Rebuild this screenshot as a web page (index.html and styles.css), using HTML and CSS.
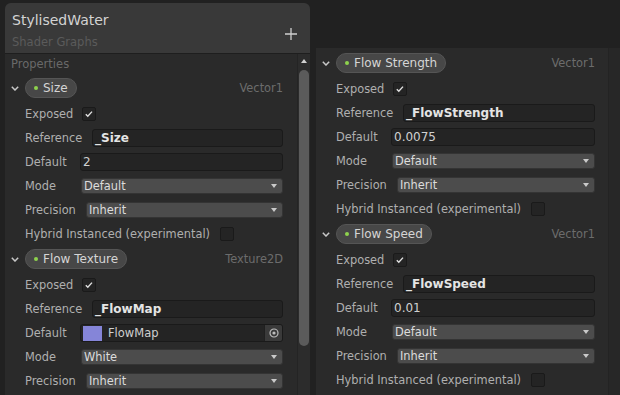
FILE: index.html
```html
<!DOCTYPE html>
<html>
<head>
<meta charset="utf-8">
<link rel="stylesheet" href="styles.css">
</head>
<body>
<div class="stage">
  <section class="panel left">
    <header class="head">
      <div class="head-text">
        <div class="title">StylisedWater</div>
        <div class="subtitle">Shader Graphs</div>
      </div>
      <svg class="plus" width="12" height="12" viewBox="0 0 12 12"><path d="M6 0V12M0 6H12" stroke="#cfcfcf" stroke-width="1.3" fill="none"/></svg>
    </header>
    <div class="body">
      <div class="content">
        <div class="section-label">Properties</div>

        <div class="prop">
          <div class="prop-head">
            <span class="chev"><svg width="8" height="5" viewBox="0 0 8 5"><path d="M0.8 0.8L4 4L7.2 0.8" stroke="#c8c8c8" stroke-width="1.5" fill="none"/></svg></span>
            <span class="pill"><span class="dot"></span>Size</span>
            <span class="type">Vector1</span>
          </div>
          <div class="row"><span class="label w-exp">Exposed</span><span class="check"><svg width="12" height="12" viewBox="0 0 12 12"><path d="M2.8 6.2L4.8 8.2L9 3.6" stroke="#e2e2e2" stroke-width="1.4" fill="none"/></svg></span></div>
          <div class="row"><span class="label w-ref">Reference</span><span class="input bold">_Size</span></div>
          <div class="row"><span class="label w-def">Default</span><span class="input">2</span></div>
          <div class="row"><span class="label w-mode">Mode</span><span class="select"><span>Default</span><span class="arrow"></span></span></div>
          <div class="row"><span class="label w-prec">Precision</span><span class="select"><span>Inherit</span><span class="arrow"></span></span></div>
          <div class="row"><span class="label w-hyb">Hybrid Instanced (experimental)</span><span class="check"></span></div>
        </div>

        <div class="prop">
          <div class="prop-head">
            <span class="chev"><svg width="8" height="5" viewBox="0 0 8 5"><path d="M0.8 0.8L4 4L7.2 0.8" stroke="#c8c8c8" stroke-width="1.5" fill="none"/></svg></span>
            <span class="pill"><span class="dot"></span>Flow Texture</span>
            <span class="type">Texture2D</span>
          </div>
          <div class="row"><span class="label w-exp">Exposed</span><span class="check"><svg width="12" height="12" viewBox="0 0 12 12"><path d="M2.8 6.2L4.8 8.2L9 3.6" stroke="#e2e2e2" stroke-width="1.4" fill="none"/></svg></span></div>
          <div class="row"><span class="label w-ref">Reference</span><span class="input bold">_FlowMap</span></div>
          <div class="row"><span class="label w-def">Default</span>
            <span class="input object">
              <span class="swatch"></span><span class="obj-name">FlowMap</span>
              <span class="picker"><svg width="10" height="10" viewBox="0 0 10 10"><circle cx="5" cy="5" r="4" stroke="#bdbdbd" stroke-width="1.2" fill="none"/><circle cx="5" cy="5" r="1.6" fill="#bdbdbd"/></svg></span>
            </span>
          </div>
          <div class="row"><span class="label w-mode">Mode</span><span class="select"><span>White</span><span class="arrow"></span></span></div>
          <div class="row"><span class="label w-prec">Precision</span><span class="select"><span>Inherit</span><span class="arrow"></span></span></div>
        </div>
      </div>
      <div class="scrolltrack">
        <span class="up-arrow"></span>
        <span class="thumb"></span>
      </div>
    </div>
  </section>

  <section class="panel right">
    <div class="content">
      <div class="prop">
        <div class="prop-head">
          <span class="chev"><svg width="8" height="5" viewBox="0 0 8 5"><path d="M0.8 0.8L4 4L7.2 0.8" stroke="#c8c8c8" stroke-width="1.5" fill="none"/></svg></span>
          <span class="pill"><span class="dot"></span>Flow Strength</span>
          <span class="type">Vector1</span>
        </div>
        <div class="row"><span class="label w-exp">Exposed</span><span class="check"><svg width="12" height="12" viewBox="0 0 12 12"><path d="M2.8 6.2L4.8 8.2L9 3.6" stroke="#e2e2e2" stroke-width="1.4" fill="none"/></svg></span></div>
        <div class="row"><span class="label w-ref">Reference</span><span class="input bold">_FlowStrength</span></div>
        <div class="row"><span class="label w-def">Default</span><span class="input">0.0075</span></div>
        <div class="row"><span class="label w-mode">Mode</span><span class="select"><span>Default</span><span class="arrow"></span></span></div>
        <div class="row"><span class="label w-prec">Precision</span><span class="select"><span>Inherit</span><span class="arrow"></span></span></div>
        <div class="row"><span class="label w-hyb">Hybrid Instanced (experimental)</span><span class="check"></span></div>
      </div>

      <div class="prop">
        <div class="prop-head">
          <span class="chev"><svg width="8" height="5" viewBox="0 0 8 5"><path d="M0.8 0.8L4 4L7.2 0.8" stroke="#c8c8c8" stroke-width="1.5" fill="none"/></svg></span>
          <span class="pill"><span class="dot"></span>Flow Speed</span>
          <span class="type">Vector1</span>
        </div>
        <div class="row"><span class="label w-exp">Exposed</span><span class="check"><svg width="12" height="12" viewBox="0 0 12 12"><path d="M2.8 6.2L4.8 8.2L9 3.6" stroke="#e2e2e2" stroke-width="1.4" fill="none"/></svg></span></div>
        <div class="row"><span class="label w-ref">Reference</span><span class="input bold">_FlowSpeed</span></div>
        <div class="row"><span class="label w-def">Default</span><span class="input">0.01</span></div>
        <div class="row"><span class="label w-mode">Mode</span><span class="select"><span>Default</span><span class="arrow"></span></span></div>
        <div class="row"><span class="label w-prec">Precision</span><span class="select"><span>Inherit</span><span class="arrow"></span></span></div>
        <div class="row"><span class="label w-hyb">Hybrid Instanced (experimental)</span><span class="check"></span></div>
      </div>
    </div>
    <div class="side-track"></div>
  </section>
</div>
</body>
</html>
```

FILE: styles.css
```css
* { box-sizing: border-box; }
html, body { margin: 0; padding: 0; }
body {
  background: #212121;
  font-family: "DejaVu Sans", "Verdana", sans-serif;
  font-size: 11.4px;
  color: #b3b3b3;
  width: 620px;
  height: 395px;
  overflow: hidden;
}
.stage {
  display: flex;
  align-items: flex-start;
  height: 395px;
  overflow: hidden;
}
.panel { background: #2a2a2a; }
.left {
  width: 305px;
  margin: 3px 0 0 5px;
  border-radius: 6px 6px 0 0;
  height: 392px;
  display: flex;
  flex-direction: column;
  overflow: hidden;
}
.head {
  flex: none;
  height: 51px;
  background: #393939;
  border-bottom: 1px solid #1e1e1e;
  display: flex;
  justify-content: space-between;
  align-items: flex-start;
  padding: 9px 13px 0 7px;
}
.title {
  font-size: 14px;
  line-height: 17px;
  color: #d3d3d3;
}
.subtitle {
  margin-top: 6px;
  font-size: 11.5px;
  line-height: 15px;
  color: #5b5b5b;
}
.plus { margin-top: 16px; }
.body {
  flex: 1;
  display: flex;
  min-height: 0;
}
.content { flex: 1; min-width: 0; }
.section-label {
  font-size: 11.5px;
  line-height: 14px;
  color: #696969;
  padding: 3px 0 5px 6px;
}
.prop { margin-bottom: 1px; }
.prop-head {
  display: flex;
  align-items: center;
  height: 26px;
  padding: 2px 14px 4px 0;
}
.chev {
  width: 20px;
  flex: none;
  display: flex;
  padding-left: 6px;
  padding-top: 1px;
}
.pill {
  display: inline-flex;
  align-items: center;
  height: 20px;
  padding: 0 8px 0 9px;
  border-radius: 10px;
  background: #474747;
  border: 1px solid #555;
  color: #d5d5d5;
  font-size: 12px;
}
.dot {
  width: 4px;
  height: 4px;
  border-radius: 50%;
  background: #8ed34d;
  margin-right: 5px;
  margin-left: -1px;
}
.type {
  margin-left: auto;
  color: #6c6c6c;
}
.row {
  display: flex;
  align-items: center;
  height: 24px;
  padding: 0 14px 0 20px;
}
.label { flex: none; color: #afafaf; white-space: nowrap; }
.w-exp { width: 57px; }
.w-ref { width: 67px; }
.w-def { width: 55px; }
.w-mode { width: 56px; }
.w-prec { width: 61px; }
.w-hyb { width: 195px; }
.check {
  width: 14px;
  height: 14px;
  background: #242424;
  border: 1px solid #1a1a1a;
  border-radius: 2px;
  display: flex;
  align-items: center;
  justify-content: center;
}
.input {
  flex: 1;
  min-width: 0;
  height: 18px;
  background: #242424;
  border: 1px solid #1a1a1a;
  border-radius: 3px;
  padding-left: 2px;
  display: flex;
  align-items: center;
  font-size: 12px;
  color: #d0d0d0;
}
.input.bold {
  font-weight: bold;
  color: #e4e4e4;
}
.object { padding-left: 2px; font-size: 11.5px; }
.swatch {
  width: 19px;
  height: 15px;
  background: #8585d8;
  margin-right: 6px;
}
.obj-name { flex: 1; color: #cfcfcf; }
.picker {
  width: 18px;
  height: 16px;
  background: #3a3a3a;
  border-left: 1px solid #202020;
  border-radius: 0 2px 2px 0;
  display: flex;
  align-items: center;
  justify-content: center;
}
.select {
  flex: 1;
  min-width: 0;
  height: 16px;
  background: #4c4c4c;
  border: 1px solid #343434;
  border-radius: 3px;
  padding: 0 5px 0 2px;
  display: flex;
  align-items: center;
  justify-content: space-between;
  color: #dcdcdc;
}
.arrow {
  width: 0;
  height: 0;
  border-left: 3.5px solid transparent;
  border-right: 3.5px solid transparent;
  border-top: 4px solid #c9c9c9;
}
.scrolltrack {
  flex: none;
  width: 13px;
  background: #2c2c2c;
  border-left: 1px solid #242424;
  display: flex;
  flex-direction: column;
  align-items: center;
  padding-top: 5px;
}
.up-arrow {
  width: 0;
  height: 0;
  border-left: 3.5px solid transparent;
  border-right: 3.5px solid transparent;
  border-bottom: 4px solid #d0d0d0;
}
.thumb {
  margin-top: 7px;
  width: 10px;
  height: 276px;
  border-radius: 5px;
  background: #5b5b5b;
}
.right {
  width: 304px;
  margin: 48px 0 0 6px;
  height: 347px;
  display: flex;
}
.right .content { width: 292px; padding-top: 3px; }
.right .row, .right .prop-head { padding-right: 13px; }
.side-track {
  width: 12px;
  flex: none;
  background: #272727;
  border-left: 1px solid #232323;
}
```
